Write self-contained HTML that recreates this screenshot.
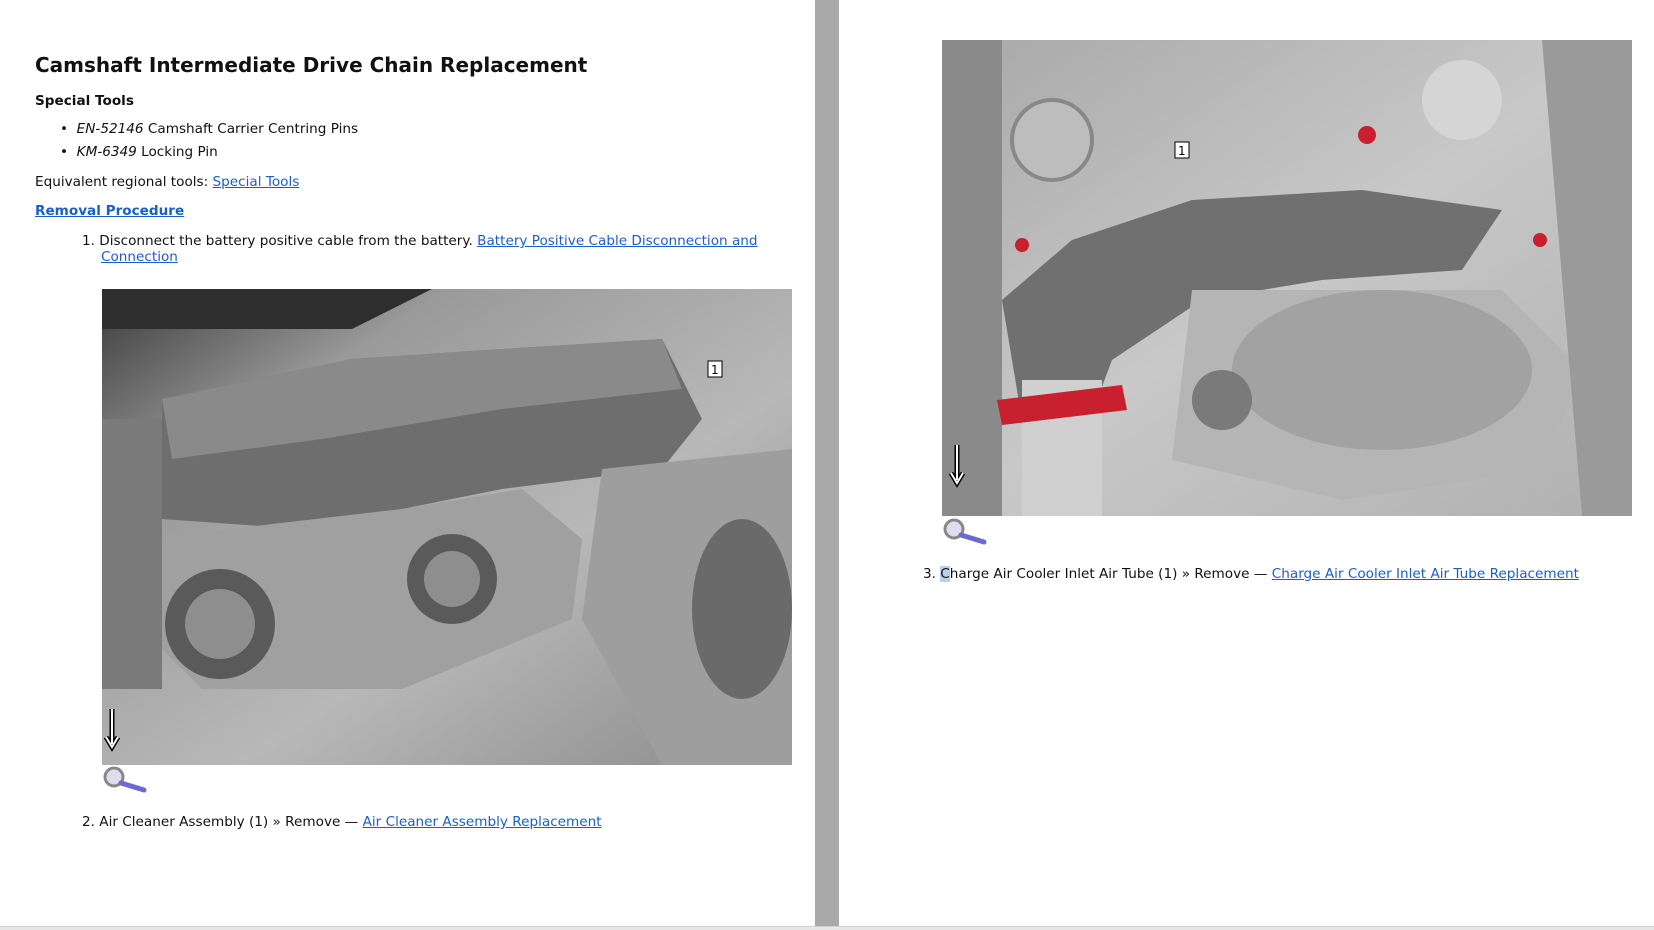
<!DOCTYPE html>
<html><head><meta charset="utf-8"><style>
*{margin:0;padding:0;box-sizing:border-box}
body{width:1654px;height:930px;background:#fff;position:relative;overflow:hidden;font-family:"DejaVu Sans","Liberation Sans",sans-serif;font-size:13.6px;color:#111}
.a{position:absolute;white-space:nowrap}
a{color:#1a5fc8;text-decoration:underline}
h1{font-size:20px;font-weight:bold}
.bar{position:absolute;left:815px;top:0;width:24px;height:926px;background:#a9a9a9}
.bot{position:absolute;left:0;top:926px;width:1654px;height:4px;background:#e6e6e6;border-top:1px solid #d0d0d0}
</style></head><body>
<div class="a" style="left:35px;top:53px"><h1>Camshaft Intermediate Drive Chain Replacement</h1></div>
<div class="a" style="left:35px;top:93px;font-weight:bold">Special Tools</div>
<div class="a" style="left:60px;top:121px">•&nbsp;&nbsp;<i>EN-52146</i> Camshaft Carrier Centring Pins</div>
<div class="a" style="left:60px;top:144px">•&nbsp;&nbsp;<i>KM-6349</i> Locking Pin</div>
<div class="a" style="left:35px;top:174px">Equivalent regional tools: <a>Special Tools</a></div>
<div class="a" style="left:35px;top:203px;font-weight:bold"><a>Removal Procedure</a></div>
<div class="a" style="left:82px;top:233px">1. Disconnect the battery positive cable from the battery. <a>Battery Positive Cable Disconnection and</a></div>
<div class="a" style="left:101px;top:249px"><a>Connection</a></div>

<svg class="a" style="left:102px;top:289px" width="690" height="476" viewBox="0 0 690 476">
<defs><linearGradient id="g1" x1="0" y1="0" x2="1" y2="1"><stop offset="0" stop-color="#3a3a3a"/><stop offset=".25" stop-color="#9a9a9a"/><stop offset=".6" stop-color="#b8b8b8"/><stop offset="1" stop-color="#8a8a8a"/></linearGradient></defs>
<rect width="690" height="476" fill="url(#g1)"/>
<path d="M0 0H330L250 40H0Z" fill="#2e2e2e"/>
<path d="M60 110L250 70L400 60L560 50L600 130L560 180L400 200L200 240L60 230Z" fill="#6e6e6e"/>
<path d="M60 110L250 70L400 60L560 50L580 100L400 120L220 150L70 170Z" fill="#8a8a8a"/>
<path d="M40 250L300 220L420 200L480 250L470 330L300 400L100 400L40 340Z" fill="#a0a0a0"/>
<circle cx="118" cy="335" r="55" fill="#5a5a5a"/><circle cx="118" cy="335" r="35" fill="#8e8e8e"/>
<circle cx="350" cy="290" r="45" fill="#5a5a5a"/><circle cx="350" cy="290" r="28" fill="#8e8e8e"/>
<path d="M500 180L690 160V476H560L480 330Z" fill="#9e9e9e"/>
<ellipse cx="640" cy="320" rx="50" ry="90" fill="#6a6a6a"/>
<path d="M0 130H60V400H0Z" fill="#7a7a7a"/>
<rect x="606" y="72" width="14" height="16" fill="#fff" stroke="#000"/>
<text x="609" y="85" font-size="12" font-family="DejaVu Sans">1</text>
<path d="M10 420V455M4 448L10 458L16 448" stroke="#000" stroke-width="5" fill="none"/>
<path d="M10 420V455M4 448L10 458L16 448" stroke="#fff" stroke-width="2" fill="none"/>
</svg>
<svg class="a" style="left:102px;top:765px" width="48" height="28"><circle cx="12" cy="12" r="9" fill="#dde" stroke="#888" stroke-width="3"/><path d="M19 18L42 25" stroke="#6a6ad0" stroke-width="5" stroke-linecap="round"/></svg>
<div class="a" style="left:82px;top:814px">2. Air Cleaner Assembly (1) » Remove — <a>Air Cleaner Assembly Replacement</a></div>

<div class="bar"></div>

<svg class="a" style="left:942px;top:40px" width="690" height="476" viewBox="0 0 690 476">
<defs><linearGradient id="g2" x1="0" y1="0" x2="1" y2="1"><stop offset="0" stop-color="#a8a8a8"/><stop offset=".5" stop-color="#c8c8c8"/><stop offset="1" stop-color="#b0b0b0"/></linearGradient></defs>
<rect width="690" height="476" fill="url(#g2)"/>
<path d="M0 0H60V476H0Z" fill="#8a8a8a"/>
<path d="M60 260L130 200L250 160L420 150L560 170L520 230L380 240L260 260L170 320L140 400L80 380Z" fill="#707070"/>
<path d="M250 250L560 250L640 330L600 430L400 460L230 420Z" fill="#b5b5b5"/>
<ellipse cx="440" cy="330" rx="150" ry="80" fill="#a2a2a2"/>
<circle cx="280" cy="360" r="30" fill="#7a7a7a"/>
<rect x="80" y="340" width="80" height="136" fill="#d0d0d0"/>
<path d="M55 360L180 345L185 370L60 385Z" fill="#c8202e"/>
<circle cx="110" cy="100" r="40" fill="#bdbdbd" stroke="#888" stroke-width="4"/>
<circle cx="520" cy="60" r="40" fill="#d5d5d5"/>
<circle cx="425" cy="95" r="9" fill="#c8202e"/>
<circle cx="80" cy="205" r="7" fill="#c8202e"/>
<circle cx="598" cy="200" r="7" fill="#c8202e"/>
<path d="M600 0H690V476H640Z" fill="#9a9a9a"/>
<rect x="233" y="102" width="14" height="16" fill="#fff" stroke="#000"/>
<text x="236" y="115" font-size="12" font-family="DejaVu Sans">1</text>
<path d="M15 405V440M9 433L15 443L21 433" stroke="#000" stroke-width="5" fill="none"/>
<path d="M15 405V440M9 433L15 443L21 433" stroke="#fff" stroke-width="2" fill="none"/>
</svg>
<svg class="a" style="left:942px;top:517px" width="48" height="30"><circle cx="12" cy="12" r="9" fill="#dde" stroke="#888" stroke-width="3"/><path d="M19 18L42 25" stroke="#6a6ad0" stroke-width="5" stroke-linecap="round"/></svg>
<div class="a" style="left:923px;top:566px">3. <span style="background:#b8d0ee">C</span>harge Air Cooler Inlet Air Tube (1) » Remove — <a>Charge Air Cooler Inlet Air Tube Replacement</a></div>

<div class="bot"></div>
</body></html>
